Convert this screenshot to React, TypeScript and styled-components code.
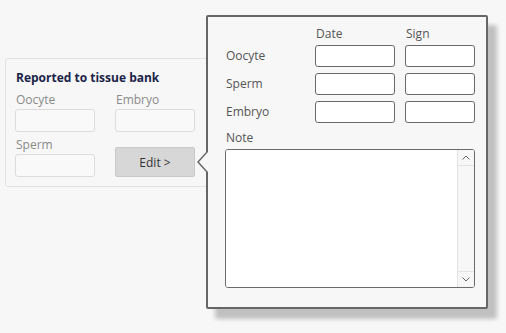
import React from "react";
import styled, { createGlobalStyle } from "styled-components";

const Global = createGlobalStyle`
  html, body { margin: 0; padding: 0; background: #f7f7f7; }
  body { font-family: "Open Sans", "Noto Sans", sans-serif; font-size: 12px; }
  * { box-sizing: border-box; }
`;

const Page = styled.div`
  position: relative;
  width: 506px;
  height: 333px;
  padding: 58px 0 0 5px;
  background: #f7f7f7;
`;

const Card = styled.section`
  width: 215px;
  border: 1px solid #e2e2e2;
  border-radius: 3px;
  background: #f7f7f7;
  padding: 10px 10px 9px 9px;
`;

const CardTitle = styled.h3`
  margin: 0 0 6px 1px;
  font-size: 12px;
  line-height: 17px;
  font-weight: 700;
  color: #1b2448;
`;

const CardGrid = styled.div`
  display: grid;
  grid-template-columns: 80px 80px;
  column-gap: 20px;
  row-gap: 5px;
  align-items: end;
`;

const Field = styled.div`
  display: flex;
  flex-direction: column;
`;

const CardLabel = styled.label`
  color: #8a8a8a;
  line-height: 16px;
  margin: 0 0 1px 1px;
`;

const CardInput = styled.div`
  height: 23px;
  border: 1px solid #dcdcdc;
  border-radius: 3px;
  background: #f9f9f9;
`;

const EditButton = styled.button`
  height: 30px;
  border: 1px solid #c9c9c9;
  border-radius: 2px;
  background: #d7d7d7;
  color: #333;
  font-family: inherit;
  font-size: 12px;
  padding: 0;
`;

const Popup = styled.div`
  position: absolute;
  left: 206px;
  top: 15px;
  width: 282px;
  height: 294px;
  border: 2px solid #666;
  border-radius: 2px;
  background: #f7f7f7;
  box-shadow: 9px 10px 4px rgba(0, 0, 0, 0.22);
  padding: 9px 10px 0 17px;

  &::before, &::after {
    content: "";
    position: absolute;
    width: 0;
    height: 0;
    border-style: solid;
  }
  &::before {
    left: -11px;
    top: 134px;
    border-width: 11px 10px 11px 0;
    border-color: transparent #666 transparent transparent;
  }
  &::after {
    left: -9px;
    top: 135px;
    border-width: 10px 9px 10px 0;
    border-color: transparent #f7f7f7 transparent transparent;
  }
`;

const Table = styled.div`
  display: grid;
  grid-template-columns: 80px 80px 70px;
  column-gap: 10px;
  row-gap: 6px;
  align-items: center;
`;

const ColHead = styled.div`
  color: #555;
  line-height: 16px;
  padding-left: 1px;
  margin-bottom: -3px;
`;

const RowLabel = styled.div`
  color: #555;
  line-height: 16px;
  padding-left: 1px;
`;

const CellInput = styled.div`
  height: 22px;
  border: 1px solid #6a6a6a;
  border-radius: 3px;
  background: #fff;
`;

const NoteLabel = styled.div`
  color: #555;
  line-height: 16px;
  margin: 7px 0 3px 1px;
`;

const NoteBox = styled.div`
  display: flex;
  width: 250px;
  height: 139px;
  border: 1px solid #6a6a6a;
  border-radius: 3px;
  background: #fff;
  overflow: hidden;
`;

const NoteArea = styled.div`
  flex: 1;
  background: #fff;
`;

const ScrollBar = styled.div`
  width: 17px;
  display: flex;
  flex-direction: column;
  border-left: 1px solid #e3e3e3;
  background: #f7f7f7;
`;

const ScrollButton = styled.div<{ $down?: boolean }>`
  height: 16px;
  display: flex;
  align-items: center;
  justify-content: center;
  background: #f7f7f7;
  ${(p) => (p.$down ? "border-top: 1px solid #e3e3e3;" : "border-bottom: 1px solid #e3e3e3;")}
`;

const Track = styled.div`
  flex: 1;
`;

const Chevron = ({ down }: { down?: boolean }) => (
  <svg width="8" height="5" viewBox="0 0 8 5">
    <polyline
      points={down ? "0.5,0.5 4,4 7.5,0.5" : "0.5,4.5 4,1 7.5,4.5"}
      fill="none"
      stroke="#666"
      strokeWidth="1"
    />
  </svg>
);

const rows = ["Oocyte", "Sperm", "Embryo"];

export default function App() {
  return (
    <Page>
      <Global />
      <Card>
        <CardTitle>Reported to tissue bank</CardTitle>
        <CardGrid>
          <Field>
            <CardLabel>Oocyte</CardLabel>
            <CardInput />
          </Field>
          <Field>
            <CardLabel>Embryo</CardLabel>
            <CardInput />
          </Field>
          <Field>
            <CardLabel>Sperm</CardLabel>
            <CardInput />
          </Field>
          <EditButton>Edit &gt;</EditButton>
        </CardGrid>
      </Card>
      <Popup>
        <Table>
          <span />
          <ColHead>Date</ColHead>
          <ColHead>Sign</ColHead>
          {rows.map((r) => (
            <React.Fragment key={r}>
              <RowLabel>{r}</RowLabel>
              <CellInput />
              <CellInput />
            </React.Fragment>
          ))}
        </Table>
        <NoteLabel>Note</NoteLabel>
        <NoteBox>
          <NoteArea />
          <ScrollBar>
            <ScrollButton>
              <Chevron />
            </ScrollButton>
            <Track />
            <ScrollButton $down>
              <Chevron down />
            </ScrollButton>
          </ScrollBar>
        </NoteBox>
      </Popup>
    </Page>
  );
}
